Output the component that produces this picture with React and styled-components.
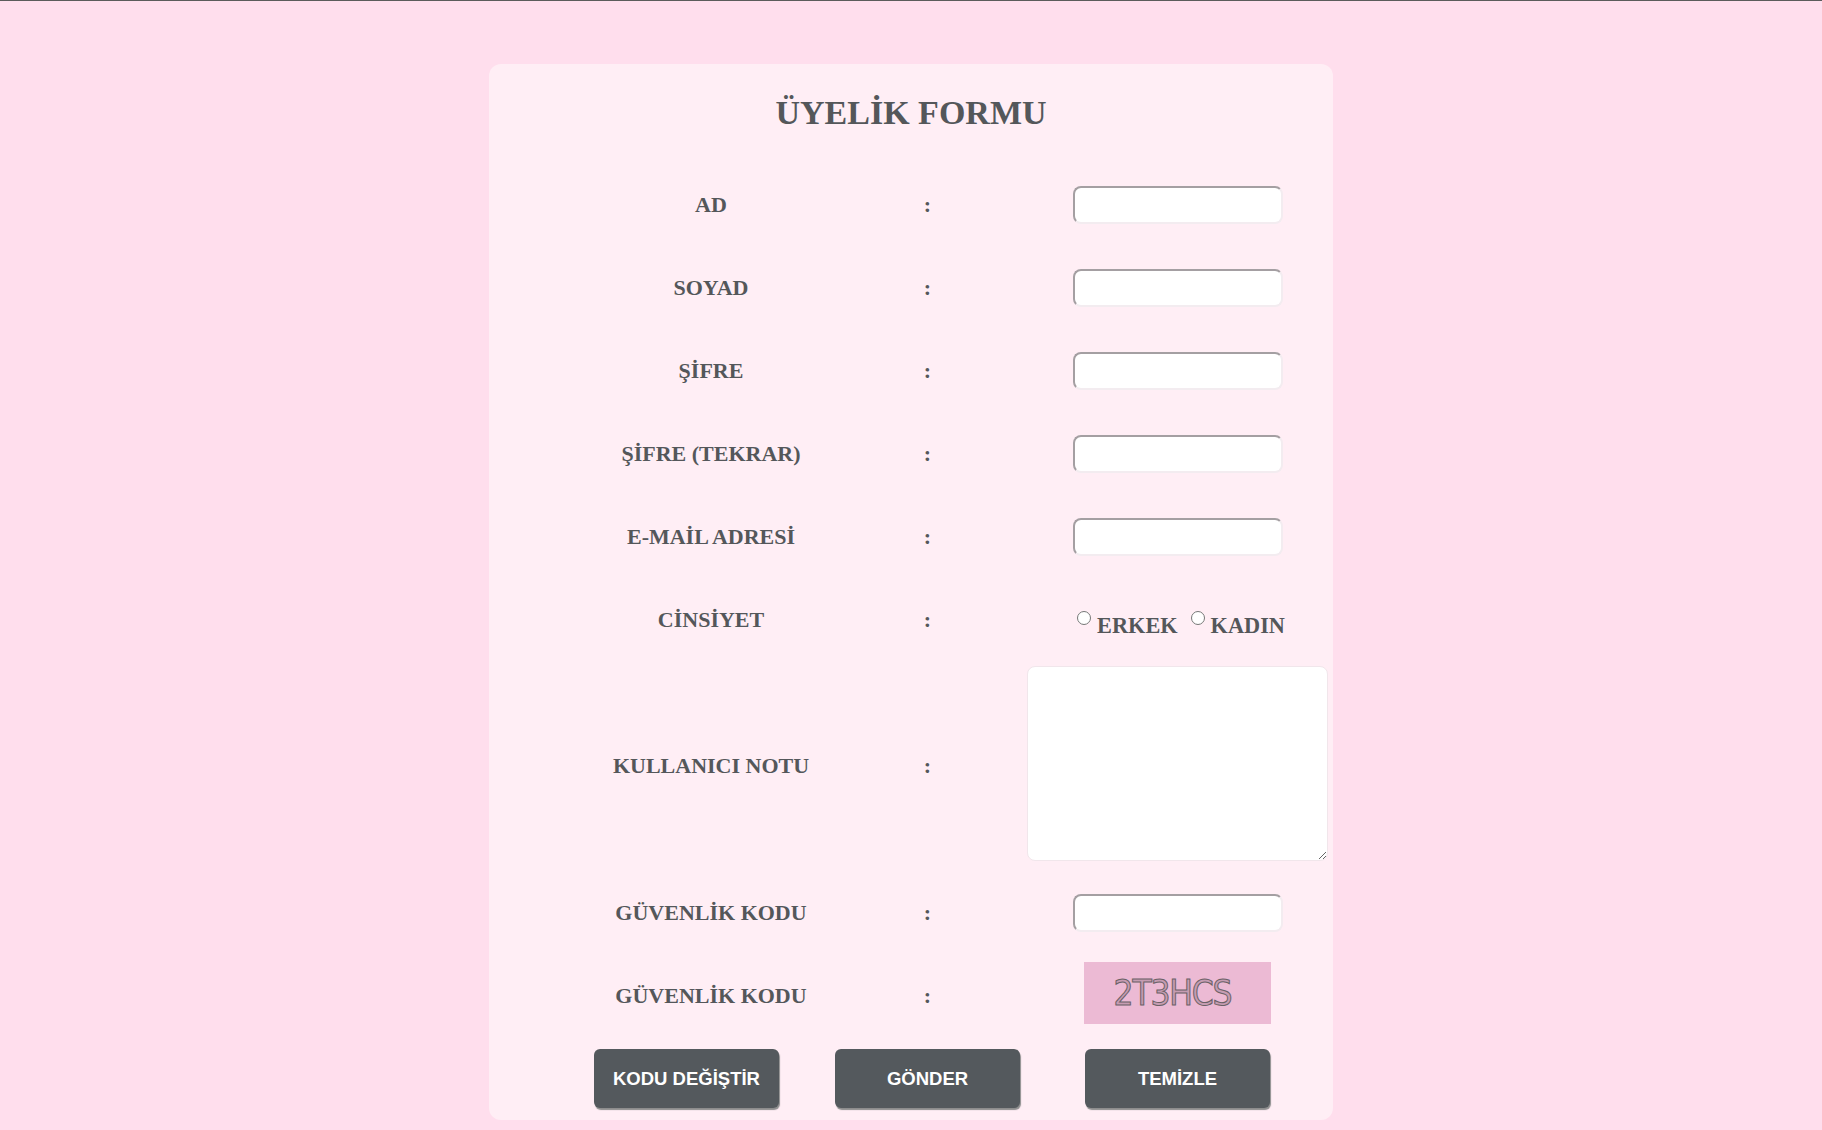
import React, { useState } from 'react';
import styled, { createGlobalStyle } from 'styled-components';

const GlobalStyle = createGlobalStyle`
  html, body {
    margin: 0;
    padding: 0;
    background: #ffdeed;
  }
  body {
    border-top: 1px solid #5b5b5b;
    font-family: "Liberation Serif", "Times New Roman", serif;
  }
`;

const fields = [
  { name: 'ad', label: 'AD', type: 'text' },
  { name: 'soyad', label: 'SOYAD', type: 'text' },
  { name: 'sifre', label: 'ŞİFRE', type: 'password' },
  { name: 'sifre2', label: 'ŞİFRE (TEKRAR)', type: 'password' },
  { name: 'email', label: 'E-MAİL ADRESİ', type: 'email' },
];

const App = () => {
  const [captcha, setCaptcha] = useState('2T3HCS');
  const [values, setValues] = useState({});

  const update = (e) => setValues({ ...values, [e.target.name]: e.target.value });

  const newCode = () => {
    const chars = 'ABCDEFGHJKLMNPRSTUVWXYZ23456789';
    let code = '';
    for (let i = 0; i < 6; i++) code += chars[Math.floor(Math.random() * chars.length)];
    setCaptcha(code);
  };

  return (
    <>
      <GlobalStyle />
      <Page>
        <Card onSubmit={(e) => e.preventDefault()}>
          <Title>ÜYELİK FORMU</Title>
          <FormGrid>
            {fields.map((f) => (
              <Row key={f.name}>
                <Label>{f.label}</Label>
                <Colon>:</Colon>
                <Cell>
                  <Input type={f.type} name={f.name} value={values[f.name] || ''} onChange={update} />
                </Cell>
              </Row>
            ))}

            <Row>
              <Label>CİNSİYET</Label>
              <Colon>:</Colon>
              <Cell>
                <Radios>
                  <RadioOption>
                    <Radio type='radio' name='cinsiyet' value='erkek' />
                    ERKEK
                  </RadioOption>
                  <RadioOption>
                    <Radio type='radio' name='cinsiyet' value='kadin' />
                    KADIN
                  </RadioOption>
                </Radios>
              </Cell>
            </Row>

            <Row $tall>
              <Label>KULLANICI NOTU</Label>
              <Colon>:</Colon>
              <Cell>
                <Note name='not' />
              </Cell>
            </Row>

            <Row>
              <Label>GÜVENLİK KODU</Label>
              <Colon>:</Colon>
              <Cell>
                <Input type='text' name='kod' value={values.kod || ''} onChange={update} />
              </Cell>
            </Row>

            <Row>
              <Label>GÜVENLİK KODU</Label>
              <Colon>:</Colon>
              <Cell>
                <Captcha>{captcha}</Captcha>
              </Cell>
            </Row>

            <ButtonRow>
              <Button type='button' $align='start' onClick={newCode}>
                KODU DEĞİŞTİR
              </Button>
              <Button type='submit'>GÖNDER</Button>
              <Button type='reset' onClick={() => setValues({})}>
                TEMİZLE
              </Button>
            </ButtonRow>
          </FormGrid>
        </Card>
      </Page>
    </>
  );
};

export default App;

const Page = styled.div`
  display: flex;
  justify-content: center;
  padding-top: 63px;
  min-height: 1066px;
`;

const Card = styled.form`
  width: 844px;
  height: 1056px;
  box-sizing: border-box;
  background: #ffeef5;
  border-radius: 12px;
  margin: 0;
`;

const Title = styled.h1`
  margin: 0;
  padding: 29px 0 30px;
  line-height: 40px;
  font-size: 34px;
  font-weight: bold;
  text-align: center;
  color: #54575a;
`;

const FormGrid = styled.div`
  display: grid;
  grid-template-columns: 234px 199px 301px;
  margin-left: 105px;
`;

const Row = styled.div`
  display: contents;
  & > * {
    height: ${(p) => (p.$tall ? '210px' : '83px')};
  }
`;

const Label = styled.div`
  display: flex;
  align-items: center;
  justify-content: center;
  font-size: 22px;
  font-weight: bold;
  color: #54575a;
`;

const Colon = styled(Label)``;

const Cell = styled.div`
  display: flex;
  align-items: center;
  justify-content: center;
`;

const Input = styled.input`
  width: 210px;
  height: 38px;
  box-sizing: border-box;
  background: #fff;
  border-style: solid;
  border-width: 2px;
  border-color: #a49fa2 #f3ecf0 #f3ecf0 #a49fa2;
  border-radius: 8px;
  padding: 2px 8px;
  font-size: 16px;
  outline: none;
`;

const Radios = styled.div`
  display: flex;
  align-items: flex-start;
  gap: 13px;
  padding: 13px 0 0 7px;
`;

const RadioOption = styled.label`
  display: flex;
  align-items: flex-start;
  font-size: 22.3px;
  font-weight: bold;
  color: #54575a;
  line-height: 22px;
`;

const Radio = styled.input`
  width: 14px;
  height: 14px;
  margin: -4px 6px 0 0;
`;

const Note = styled.textarea`
  width: 301px;
  height: 195px;
  box-sizing: border-box;
  background: #fff;
  border: 1px solid #f1e6eb;
  border-radius: 8px;
  margin-top: -5px;
  outline: none;
`;

const Captcha = styled.div`
  width: 187px;
  height: 62px;
  margin-top: -5px;
  box-sizing: border-box;
  background: #ecbad4;
  display: flex;
  align-items: center;
  justify-content: center;
  padding-right: 10px;
  font-family: "Liberation Sans Narrow", "DejaVu Sans Condensed", "Liberation Sans", sans-serif;
  font-size: 35px;
  letter-spacing: -1.2px;
  color: #c69cb2;
  -webkit-text-stroke: 1px #6a6166;
  user-select: none;
`;

const ButtonRow = styled.div`
  display: contents;
  & > * {
    margin-top: 12px;
  }
`;

const Button = styled.button`
  justify-self: ${(p) => p.$align || 'center'};
  width: 185px;
  height: 59px;
  background: #54595d;
  color: #fff;
  border: none;
  border-radius: 6px;
  box-shadow: 1px 2px 1px #8d8d8d;
  font-family: "Liberation Sans", Arial, sans-serif;
  font-size: 18.5px;
  font-weight: bold;
  cursor: pointer;
`;
